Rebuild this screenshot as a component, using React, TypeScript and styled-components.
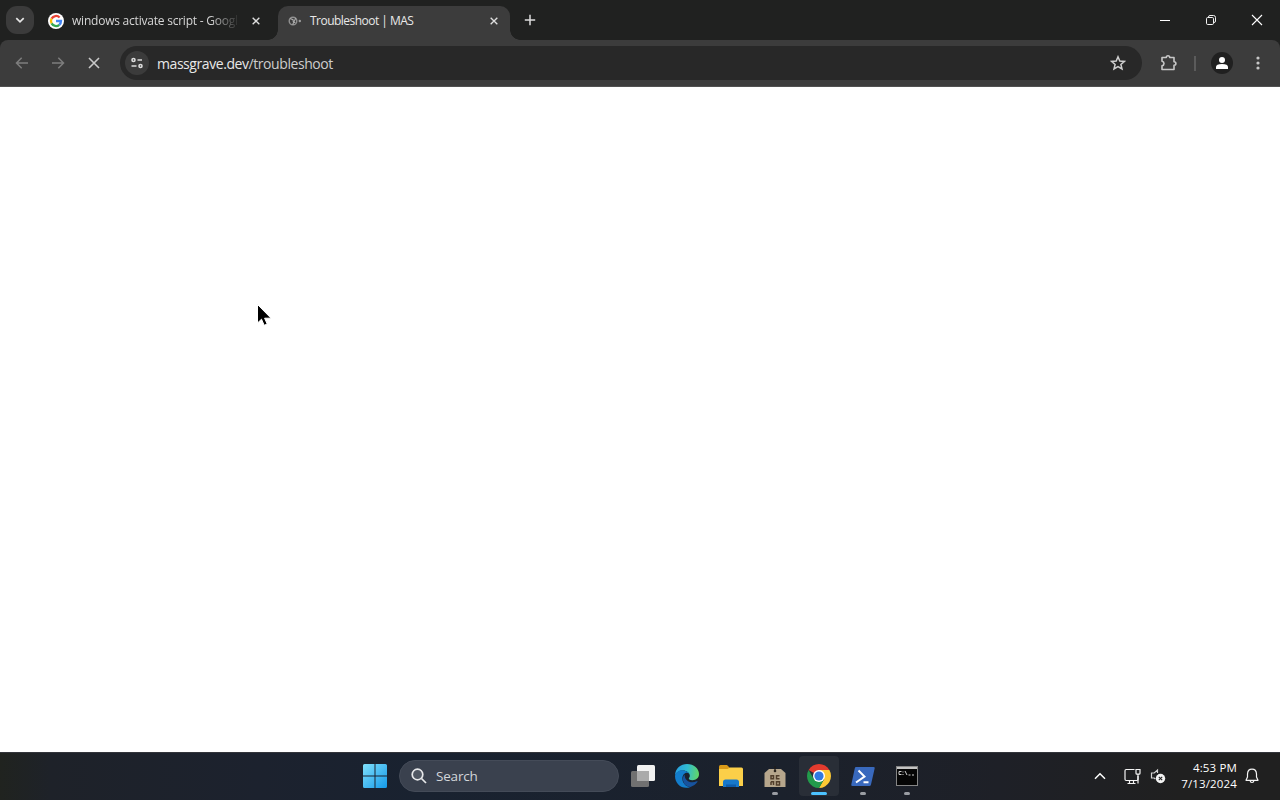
import type { ReactNode } from 'react'
import styled, { createGlobalStyle } from 'styled-components'

const GlobalStyle = createGlobalStyle`
  * {
    box-sizing: border-box;
  }

  body {
    margin: 0;
    overflow: hidden;
    background: #fff;
    font-family: 'Open Sans', 'Noto Sans', sans-serif;
  }

  svg {
    display: block;
    flex-shrink: 0;
  }
`

const Desktop = styled.div`
  display: flex;
  flex-direction: column;
  width: 1280px;
  height: 800px;
`

const TabStrip = styled.div`
  display: flex;
  align-items: flex-start;
  height: 40px;
  padding: 6px 0 0 6px;
  background: #202120;
`

const IconButton = styled.button<{ $size?: number; $bg?: string; $radius?: number }>`
  display: flex;
  flex-shrink: 0;
  align-items: center;
  justify-content: center;
  width: ${({ $size = 28 }) => $size}px;
  height: ${({ $size = 28 }) => $size}px;
  padding: 0;
  border: 0;
  border-radius: ${({ $radius = 14 }) => $radius}px;
  background: ${({ $bg = 'transparent' }) => $bg};
`

const Tab = styled.div<{ $active?: boolean }>`
  position: relative;
  display: flex;
  align-items: center;
  width: ${({ $active }) => ($active ? 232 : 244)}px;
  height: 34px;
  padding: ${({ $active }) => ($active ? '0 8px 5px 10px' : '0 14px 5px 14px')};
  border-radius: 10px 10px 0 0;
  background: ${({ $active }) => ($active ? '#3c3c3c' : 'transparent')};

  &::before,
  &::after {
    content: '';
    display: ${({ $active }) => ($active ? 'block' : 'none')};
    position: absolute;
    bottom: 0;
    width: 10px;
    height: 10px;
  }

  &::before {
    left: -10px;
    background: radial-gradient(circle at 0 0, transparent 9.5px, #3c3c3c 10px);
  }

  &::after {
    right: -10px;
    background: radial-gradient(circle at 100% 0, transparent 9.5px, #3c3c3c 10px);
  }
`

const TabTitle = styled.span<{ $fade?: boolean }>`
  width: 168px;
  margin-left: 8px;
  color: ${({ $fade }) => ($fade ? '#d6d6d6' : '#e8e8e8')};
  font-size: 12px;
  line-height: 18px;
  letter-spacing: ${({ $fade }) => ($fade ? -0.22 : -0.52)}px;
  white-space: nowrap;
  mask-image: ${({ $fade }) =>
    $fade ? 'linear-gradient(90deg, #000 138px, transparent 168px)' : 'none'};
`

const TabClose = styled(IconButton)`
  width: 16px;
  height: 16px;
  margin-left: auto;
`

const NewTab = styled(IconButton)`
  margin-left: 6px;
`

const WindowControls = styled.div`
  display: flex;
  margin: -6px 0 0 auto;
`

const WindowButton = styled.button`
  display: flex;
  align-items: center;
  justify-content: center;
  width: 46px;
  height: 40px;
  padding: 0;
  border: 0;
  background: transparent;
`

const ToolbarBack = styled.div`
  background: #202120;
`

const Toolbar = styled.div`
  display: flex;
  align-items: center;
  gap: 8px;
  height: 47px;
  padding: 0 8px;
  border-bottom: 1px solid #515151;
  border-radius: 8px 8px 0 0;
  background: #3c3c3c;
`

const AddressBar = styled.div`
  display: flex;
  align-items: center;
  width: 1022px;
  height: 34px;
  margin-left: 4px;
  padding: 0 10px 0 5px;
  border-radius: 17px;
  background: #282828;
`

const Url = styled.span`
  margin-left: 8px;
  padding-top: 1px;
  color: #cdcdcd;
  font-size: 14px;
  line-height: 20px;
  letter-spacing: -0.43px;
`

const UrlHost = styled.span`
  color: #e8e8e8;
`

const Star = styled(IconButton)`
  margin-left: auto;
`

const ToolbarEnd = styled.div`
  display: flex;
  align-items: center;
  margin-left: 5px;
`

const Divider = styled.div`
  width: 2px;
  height: 15px;
  margin: 0 15px 0 11px;
  background: #5b5b5b;
`

const MenuButton = styled(IconButton)`
  margin-left: 11px;
`

const Page = styled.main`
  flex: 1;
  background: #fff;
`

const Taskbar = styled.div`
  display: flex;
  align-items: center;
  height: 48px;
  padding: 0 0 1px 355px;
  border-top: 1px solid #33353b;
  background: linear-gradient(90deg, #20231f 0, #1e2229 50px, #1c222e 260px, #192230 420px, #1b212c 780px, #1e2027 1000px, #202020 1180px);
`

const TaskSlot = styled.div<{ $active?: boolean }>`
  position: relative;
  display: flex;
  align-items: center;
  justify-content: center;
  width: 40px;
  height: 40px;
  margin-right: 4px;
  border-radius: 4px;
  background: ${({ $active }) => ($active ? '#292e37' : 'transparent')};
`

const Indicator = styled.span<{ $active?: boolean }>`
  position: absolute;
  bottom: 1px;
  width: ${({ $active }) => ($active ? 16 : 6)}px;
  height: 3px;
  border-radius: 2px;
  background: ${({ $active }) => ($active ? '#4cc2ff' : '#9a9da3')};
`

const SearchBox = styled.div`
  display: flex;
  align-items: center;
  gap: 9px;
  width: 220px;
  height: 32px;
  margin-right: 4px;
  padding-left: 11px;
  border: 1px solid #444b58;
  border-radius: 16px;
  background: #3a414e;
  color: #d3d6da;
  font-size: 13.5px;
  letter-spacing: -0.2px;
`

const Tray = styled.div`
  display: flex;
  align-items: center;
  margin-left: auto;
  padding-right: 21px;
`

const TrayIcons = styled.div`
  display: flex;
  align-items: center;
  gap: 9px;
`

const Clock = styled.div`
  width: 71px;
  margin-right: 8px;
  color: #fff;
  font-size: 11.5px;
  line-height: 16px;
  letter-spacing: 0.15px;
  text-align: right;
`

const Pointer = styled.svg`
  position: absolute;
  top: 303px;
  left: 256px;
`

const Cross = ({ size, width, color = '#dedede' }: { size: number; width: number; color?: string }) => (
  <svg width={size} height={size} viewBox="0 0 12 12" stroke={color} strokeWidth={width}>
    <path d="M1 1l10 10M11 1L1 11" />
  </svg>
)

const GoogleIcon = () => (
  <svg width="16" height="16" viewBox="0 0 16 16" fill="none">
    <circle cx="8" cy="8" r="8" fill="#fff" />
    <g strokeWidth="2.3">
      <path d="M11.6 4.5A5 5 0 0 0 3.6 5.6" stroke="#ea4335" />
      <path d="M3.6 5.6a5 5 0 0 0 0 4.8" stroke="#fbbc04" />
      <path d="M3.6 10.4a5 5 0 0 0 7.7 1.4" stroke="#34a853" />
      <path d="M11.3 11.8A5 5 0 0 0 13 8H8" stroke="#4285f4" />
    </g>
  </svg>
)

const SiteIcon = () => (
  <svg width="14" height="12" viewBox="0 0 14 12" fill="none">
    <circle cx="5" cy="6" r="3.8" stroke="#909090" strokeWidth="1.4" />
    <path d="M2 3.5l3 1.2.3 2 2 1M4.7 9.4L7.8 3" stroke="#ababab" strokeWidth="1.1" />
    <circle cx="11.8" cy="6" r="1.2" fill="#9d9d9d" />
  </svg>
)

const Arrow = ({ forward }: { forward?: boolean }) => (
  <svg width="16" height="16" viewBox="0 0 16 16" fill="none" stroke="#7d7d7d" strokeWidth="1.5">
    <path d={forward ? 'M2 8h11M8.3 2.8L13.5 8l-5.2 5.2' : 'M14 8H3M7.7 2.8L2.5 8l5.2 5.2'} />
  </svg>
)

const TuneIcon = () => (
  <svg width="14" height="12" viewBox="0 0 14 12" fill="none" stroke="#dcdcdc" strokeWidth="1.6">
    <circle cx="3.500" cy="3" r="1.500" />
    <path d="M7.500 3H12M1.500 9h5" />
    <circle cx="10.500" cy="9" r="1.500" />
  </svg>
)

const StartIcon = () => (
  <svg width="24" height="24" viewBox="0 0 24 24">
    <defs>
      <linearGradient id="start" x1="0" y1="0" x2="1" y2="1">
        <stop offset="0" stopColor="#7fe0fb" />
        <stop offset="1" stopColor="#1499e8" />
      </linearGradient>
    </defs>
    <path
      d="M1.5 0H11.5V11.5H0V1.5Q0 0 1.5 0M12.5 0H22.5Q24 0 24 1.5V11.5H12.5M0 12.5H11.5V24H1.5Q0 24 0 22.5M12.5 12.5H24V22.5Q24 24 22.5 24H12.5"
      fill="url(#start)"
    />
  </svg>
)

const TaskViewIcon = () => (
  <svg width="24" height="22" viewBox="0 0 24 22">
    <rect x="6" y="0" width="18" height="16" rx="1.5" fill="#f1f1f1" />
    <rect x="0" y="6" width="18" height="16" rx="1.5" fill="#717171" />
    <path d="M6 6h12v10H6z" fill="#aaa" />
  </svg>
)

const EdgeIcon = () => (
  <svg width="24" height="24" viewBox="0 0 24 24">
    <defs>
      <linearGradient id="edgeTop" x1="0" y1="0.4" x2="1" y2="0.5">
        <stop offset="0" stopColor="#279fe3" />
        <stop offset="0.5" stopColor="#31bcd0" />
        <stop offset="1" stopColor="#62d765" />
      </linearGradient>
    </defs>
    <path d="M0 12C0 4 6 0 12 0c7 0 12 4.700 12 10 0 4-3 6.200-6.400 6.200-3 0-4.400-1.100-3.600-2.100 1.400-1.700 1-4.200-.8-5.700C9 4.900 1.200 6.500 0 12Z" fill="url(#edgeTop)" />
    <path d="M0 12C.8 7.600 4.900 5.800 8.800 6.500c2.600.5 4.400 1.700 5.200 3-3-2-6.600.6-6.600 5 0 4.500 3.400 8.300 8 8.400C8 26 0 20.600 0 12Z" fill="#137dcc" />
    <path d="M9.600 10.500c-4 4.400-.6 12.400 5.800 12.400 3-.8 5.500-2.600 7-4.900.4-.7 0-1.100-.8-.7-5.300 2.500-12 .3-12-6.800Z" fill="#17539e" />
  </svg>
)

const FolderIcon = () => (
  <svg width="24" height="22" viewBox="0 0 24 22">
    <path d="M0 1.500Q0 0 1.500 0H8l2.500 2.500V7H0Z" fill="#d99a18" />
    <path d="M0 4h8.500l2.500-1.500H22.500Q24 2.500 24 4V21H0Z" fill="#fbcf49" />
    <path d="M4 22v-5q0-2.500 2.500-2.500h11Q20 14.500 20 17v5Z" fill="#1878ca" />
    <path d="M7 22v-2.500h10V22Z" fill="#0e5cab" />
  </svg>
)

const TagIcon = () => (
  <svg width="22" height="21" viewBox="0 0 22 21">
    <path d="M5 3h12l4.500 4v14H.5V7Z" fill="#b6a68c" />
    <path d="M11 0v5" stroke="#211d18" strokeWidth="1.300" />
    <circle cx="11" cy="5" r="1.300" fill="#2b241d" />
    <g fill="none" stroke="#513e2b" strokeWidth="1.500">
      <path d="M7 9.700h2.500v3H7ZM15.500 9.700h-3v3h3M7 15.700h2.500V19M7 15.700V19M12.500 15.700h3V19h-3Z" />
    </g>
  </svg>
)

const ChromeIcon = () => (
  <svg width="24" height="24" viewBox="0 0 24 24">
    <path d="M12 12L1.610 6A12 12 0 0 1 22.390 6Z" fill="#e33b2e" />
    <path d="M12 6H22.390A12 12 0 0 1 12 24L17.200 15Z" fill="#fcc934" />
    <path d="M6.800 15L1.610 6A12 12 0 0 0 12 24L17.200 15Z" fill="#229b4b" />
    <circle cx="12" cy="12" r="6" fill="#fff" />
    <circle cx="12" cy="12" r="4.600" fill="#3079e0" />
  </svg>
)

const PowerShellIcon = () => (
  <svg width="24" height="19" viewBox="0 0 24 19" fill="none">
    <path d="M5 0H22.500Q24 0 23.700 1.300L20 17.500Q19.700 19 18.200 19H1.500Q0 19 .3 17.500L3.800 1.300Q4.100 0 5 0Z" fill="#3969bd" />
    <path d="M7.500 3.500l6 6-8.500 6M12.500 15.200h5" stroke="#fff" strokeWidth="2" />
  </svg>
)

const TerminalIcon = () => (
  <svg width="22" height="20" viewBox="0 0 22 20" fill="none">
    <rect x=".5" y=".5" width="21" height="19" fill="#050505" stroke="#858585" />
    <path d="M1 1h20v2H1Z" fill="#c4c4c4" />
    <path d="M5.500 5.500H3v3h2.500M7 5.500v1M7 8v1M9 5l2 4M12.500 9h2M16 9h2" stroke="#d0d0d0" />
  </svg>
)

const NetworkIcon = () => (
  <svg width="17" height="17" viewBox="0 0 17 17" fill="none" stroke="#f4f4f4" strokeWidth="1.200">
    <path d="M10.500 1.500H2.200Q1 1.500 1 2.700v8.600q0 1.200 1.200 1.200h10.600q1.200 0 1.200-1.200V8M5.500 12.500v3M9.500 12.500v3M3.500 15.500h8" />
    <path d="M12 1.500h4v3.700q0 1-1 1h-2q-1 0-1-1ZM14 6v9.500" />
  </svg>
)

const MutedIcon = () => (
  <svg width="16" height="16" viewBox="0 0 16 16" fill="none">
    <path d="M7.500 5V2L4.200 5H1.500v5h2.700l1.200 1.200" stroke="#d4d4d4" strokeWidth="1.200" />
    <circle cx="10.500" cy="10.500" r="4.700" fill="#f4f4f4" />
    <path d="M8.800 8.800l3.400 3.400M12.200 8.800l-3.400 3.400" stroke="#222" strokeWidth="1.100" />
  </svg>
)

interface TaskItem {
  name: string
  icon: ReactNode
  running?: boolean
  active?: boolean
}

const tasks: TaskItem[] = [
  { name: 'task-view', icon: <TaskViewIcon /> },
  { name: 'edge', icon: <EdgeIcon /> },
  { name: 'explorer', icon: <FolderIcon /> },
  { name: 'tag', icon: <TagIcon />, running: true },
  { name: 'chrome', icon: <ChromeIcon />, running: true, active: true },
  { name: 'powershell', icon: <PowerShellIcon />, running: true },
  { name: 'terminal', icon: <TerminalIcon />, running: true },
]

const BrowserTabs = () => (
  <TabStrip>
    <IconButton $bg="#3b3b3b" $radius={11}>
      <svg width="10" height="7" viewBox="0 0 10 7" fill="none" stroke="#e5e5e5" strokeWidth="1.700">
        <path d="M1.300 1.200L5 4.900l3.700-3.700" />
      </svg>
    </IconButton>
    <Tab>
      <GoogleIcon />
      <TabTitle $fade>windows activate script - Googl</TabTitle>
      <TabClose>
        <Cross size={8} width={2} />
      </TabClose>
    </Tab>
    <Tab $active>
      <SiteIcon />
      <TabTitle>Troubleshoot | MAS</TabTitle>
      <TabClose>
        <Cross size={8} width={2} />
      </TabClose>
    </Tab>
    <NewTab>
      <svg width="12" height="12" viewBox="0 0 12 12" stroke="#dcdcdc" strokeWidth="1.500">
        <path d="M6 .8v10.400M.8 6h10.400" />
      </svg>
    </NewTab>
    <WindowControls>
      <WindowButton>
        <svg width="10" height="10" viewBox="0 0 10 10" stroke="#fff">
          <path d="M0 5.500h10" />
        </svg>
      </WindowButton>
      <WindowButton>
        <svg width="10" height="10" viewBox="0 0 10 10" fill="none" stroke="#f2f2f2">
          <rect x=".5" y="2.500" width="7" height="7" rx="1.200" />
          <path d="M2.500 2Q2.500.5 4 .5H7.500q2 0 2 2V6q0 1.500-1.500 1.500" />
        </svg>
      </WindowButton>
      <WindowButton>
        <Cross size={12} width={1.1} color="#fff" />
      </WindowButton>
    </WindowControls>
  </TabStrip>
)

const BrowserToolbar = () => (
  <ToolbarBack>
    <Toolbar>
      <IconButton>
        <Arrow />
      </IconButton>
      <IconButton>
        <Arrow forward />
      </IconButton>
      <IconButton>
        <Cross size={12} width={1.6} color="#c9c9c9" />
      </IconButton>
      <AddressBar>
        <IconButton $size={24} $bg="#3b3b3b">
          <TuneIcon />
        </IconButton>
        <Url>
          <UrlHost>massgrave.dev</UrlHost>/troubleshoot
        </Url>
        <Star>
          <svg width="16" height="16" viewBox="0 0 16 16" fill="none" stroke="#cfcfcf" strokeWidth="1.500">
            <path d="M8 1.800l1.800 4.200 4.600.4-3.500 3 1.100 4.500L8 11.500l-4 2.400 1.100-4.500-3.500-3 4.600-.4Z" />
          </svg>
        </Star>
      </AddressBar>
      <ToolbarEnd>
        <IconButton>
          <svg width="18" height="18" viewBox="0 0 18 18" fill="none" stroke="#c7c7c7" strokeWidth="1.600">
            <path d="M2 3.500H6.300Q6.300 1.700 8 1.700t1.700 1.800H14V7.800q1.900 0 1.900 1.700T14 11.200v4.300H2V11.800q2-.4 2-2.300T2 7.200Z" strokeLinejoin="round" />
          </svg>
        </IconButton>
        <Divider />
        <IconButton $size={22} $bg="#202020">
          <svg width="12" height="12" viewBox="0 0 12 12" fill="#fff">
            <circle cx="6" cy="3" r="3" />
            <path d="M0 12V10q0-3 6-3t6 3v2Z" />
          </svg>
        </IconButton>
        <MenuButton>
          <svg width="4" height="16" viewBox="0 0 4 16" fill="#c7c7c7">
            <circle cx="2" cy="3" r="1.600" />
            <circle cx="2" cy="8" r="1.600" />
            <circle cx="2" cy="13" r="1.600" />
          </svg>
        </MenuButton>
      </ToolbarEnd>
    </Toolbar>
  </ToolbarBack>
)

const App = () => (
  <Desktop>
    <GlobalStyle />
    <BrowserTabs />
    <BrowserToolbar />
    <Page>
      <Pointer width="16" height="24" viewBox="0 0 16 24">
        <path d="M1.500 1.500V20l4-3.800 2.700 6.100 3-1.300-2.600-5.800H15Z" fill="#000" stroke="#fff" />
      </Pointer>
    </Page>
    <Taskbar>
      <TaskSlot>
        <StartIcon />
      </TaskSlot>
      <SearchBox>
        <svg width="16" height="16" viewBox="0 0 16 16" fill="none" stroke="#e6e7e9" strokeWidth="1.700">
          <circle cx="6.500" cy="6.500" r="5.300" fill="#505763" />
          <path d="M10.500 10.500l4.500 4.500" />
        </svg>
        Search
      </SearchBox>
      {tasks.map(({ name, icon, running, active }) => (
        <TaskSlot key={name} $active={active}>
          {icon}
          {running && <Indicator $active={active} />}
        </TaskSlot>
      ))}
      <Tray>
        <TrayIcons>
          <svg width="12" height="8" viewBox="0 0 12 8" fill="none" stroke="#fff" strokeWidth="1.500">
            <path d="M1 6.700l5-5 5 5" />
          </svg>
          <span />
          <NetworkIcon />
          <MutedIcon />
        </TrayIcons>
        <Clock>
          4:53 PM
          <br />
          7/13/2024
        </Clock>
        <svg width="14" height="16" viewBox="0 0 14 16" fill="none" stroke="#f4f4f4" strokeWidth="1.200">
          <path d="M7 1.200Q2.700 1.200 2.500 6v3L1 12.300h12L11.500 9V6Q11.300 1.200 7 1.200ZM5 12.500q.3 2 2 2t2-2" strokeLinejoin="round" />
        </svg>
      </Tray>
    </Taskbar>
  </Desktop>
)

export default App
